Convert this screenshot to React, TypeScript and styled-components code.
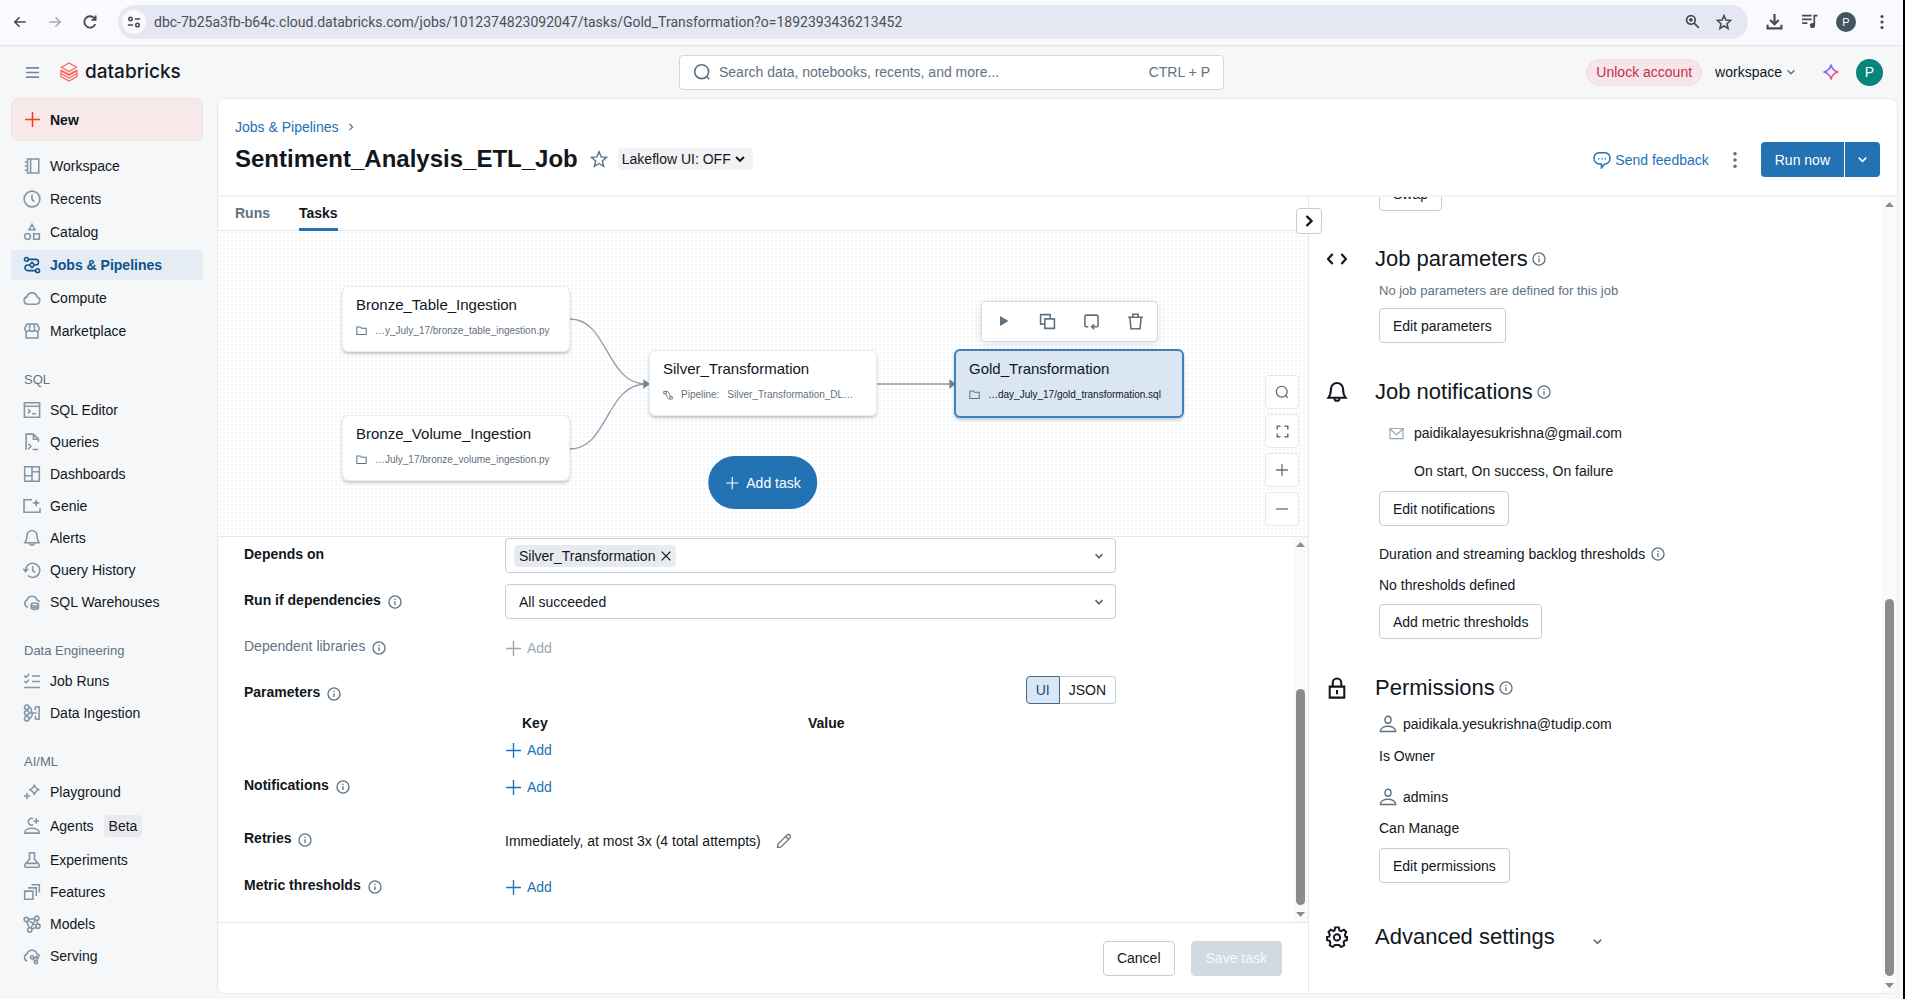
import React from "react";
import styled, { createGlobalStyle, css } from "styled-components";

const c = {
  text: "#11171c",
  muted: "#5f7281",
  icon: "#8396a5",
  link: "#2272b4",
  border: "#c0cdd8",
  line: "#e4e9ee",
  bg: "#f6f7f9",
};

const GlobalStyle = createGlobalStyle`
  * { box-sizing: border-box; }
  body {
    margin: 0;
    font-family: "Liberation Sans", Arial, sans-serif;
    font-size: 14px;
    line-height: 20px;
    color: ${c.text};
    background: ${c.bg};
  }
  button, input, select { font: inherit; color: inherit; margin: 0; }
  button { cursor: pointer; }
  h1, h2, p, ul { margin: 0; padding: 0; font-weight: 400; }
  a { color: ${c.link}; text-decoration: none; }
`;

/* ---------- icons, on a 16 unit grid ---------- */

const shapes: Record<string, React.ReactNode> = {
  back: <path d="M14.5 8H2M7.5 2.5 2 8l5.5 5.5" />,
  forward: <path d="M1.5 8H14M8.5 2.5 14 8l-5.5 5.5" />,
  reload: <path d="M13.3 10A5.7 5.7 0 1 1 12.6 4.6M13.6 1.5v4.3H9.4" />,
  tune: (
    <>
      <circle cx="4" cy="4.5" r="2" />
      <circle cx="12" cy="11.5" r="2" />
      <path d="M9 4.5h6M1 11.5h6" />
    </>
  ),
  zoomIn: (
    <>
      <circle cx="6.3" cy="6.3" r="4.6" />
      <path d="m9.8 9.8 5 5M6.3 4.3v4M4.3 6.3h4" />
    </>
  ),
  star: <path d="m8 1.6 1.9 4.5 4.8.4-3.7 3.2 1.1 4.8L8 12l-4.1 2.500L5 9.700 1.300 6.500l4.800-.4Z" />,
  download: <path d="M8 1v9M4 6.500 8 10.500l4-4M1.500 11v3.500h13V11" />,
  media: (
    <>
      <path d="M1 2.500h9M1 6h9M1 9.500h5M12.500 11.500v-9H15.500" />
      <circle cx="10.800" cy="11.800" r="1.600" fill="currentColor" />
    </>
  ),
  dots: (
    <g fill="currentColor" stroke="none">
      <circle cx="8" cy="2.500" r="1.600" />
      <circle cx="8" cy="8" r="1.600" />
      <circle cx="8" cy="13.500" r="1.600" />
    </g>
  ),
  menu: <path d="M1 3h14M1 8h14M1 13h14" />,
  search: (
    <>
      <circle cx="7.700" cy="7.700" r="6.200" />
      <path d="m11.800 11.800 2.700 2.700" />
    </>
  ),
  plus: <path d="M8 1v14M1 8h14" />,
  minus: <path d="M1 8h14" />,
  down: <path d="m4.500 6.200 3.500 3.500 3.500-3.500" />,
  right: <path d="m5.500 3 5 5-5 5" />,
  close: <path d="m3 3 10 10M13 3 3 13" />,
  notebook: (
    <path d="M4 1.750h10v12.500H4zM6.750 1.750v12.500M1.500 4.250H4M1.500 8H4M1.500 11.750H4" />
  ),
  clock: (
    <>
      <circle cx="8" cy="8" r="7" />
      <path d="M8 4v4.300l2 2" />
    </>
  ),
  catalog: (
    <>
      <path d="M8 1.200 10.700 6H5.300Z" />
      <circle cx="4" cy="12" r="2.600" />
      <path d="M9.500 9.500h5v5h-5z" />
    </>
  ),
  jobs: (
    <>
      <circle cx="3" cy="3" r="1.700" />
      <path d="M4.700 3h6.600a2.500 2.500 0 0 1 0 5h-1.100M5.800 8H4.300a2.500 2.500 0 0 0 0 5h7M8 5.700 10.300 8 8 10.300 5.700 8Z" />
      <circle cx="13" cy="13" r="1.700" />
    </>
  ),
  cloud: <path d="M4.200 13.500h7.600a3.200 3.200 0 0 0 .7-6.300 4.600 4.600 0 0 0-9-.2 3.300 3.300 0 0 0 .7 6.500Z" />,
  store: (
    <path d="M3.500 1.750h9l1.750 3.500v1a2 2 0 0 1-4.100 0 2.100 2.100 0 0 1-4.200 0 2 2 0 0 1-4.200 0v-1ZM2.750 8v6.250h10.500V8M6 1.750 5.800 6M10 1.750l.2 4.250" />
  ),
  terminal: <path d="M1.250 1.500h13.500v13H1.250zM1.250 4.700h13.500M4.500 7.500 6.300 9.200 4.500 11M8 11.300h3.500" />,
  fileCode: <path d="M2.750 15V1h6.500l4.500 4.500V8M9.250 1v4.500h4.500M4.700 9.500 7 12l-2.300 2.500M8.500 14.700h5" />,
  dashboard: <path d="M1.500 1.500h13v13h-13zM8 1.500v13M1.500 9.500H8M8 6h6.500" />,
  genie: (
    <>
      <path d="M8 2.500H.9v11h14.200V10" />
      <path d="M11.700 1.500 12.700 4.300l2.800 1-2.800 1-1 2.800-1-2.800-2.800-1 2.800-1Z" fill="currentColor" stroke="none" />
    </>
  ),
  bell: (
    <>
      <path d="M8 1.400a4.400 4.400 0 0 0-4.400 4.400c0 3.200-.8 5-1.900 6.400h12.600c-1.100-1.400-1.900-3.200-1.900-6.400A4.400 4.400 0 0 0 8 1.400Z" />
      <path d="M6.100 12.500a1.900 1.900 0 0 0 3.800 0" />
    </>
  ),
  history: <path d="M2.300 8.500a6.300 6.300 0 1 1 2 4.400M.3 7l2 2.300L4.500 7M8.600 4.500v4l2.100 1.700" />,
  warehouse: (
    <>
      <path d="M4.500 12.500a3.300 3.300 0 0 1-.9-6.300 4.600 4.600 0 0 1 8.800 0c1.400.2 2.300 1 2.600 2" />
      <ellipse cx="10.500" cy="10.200" rx="3.200" ry="1.300" />
      <path d="M7.300 10.200v3.200c0 1.500 6.400 1.500 6.400 0v-3.200M7.300 12c.6 1.200 5.800 1.200 6.400 0" />
    </>
  ),
  checklist: <path d="m1.200 3.200 1.500 1.500L5.500 1.900M1.200 8 2.700 9.500l2.800-2.800M8 3.500h7M8 8.500h7M1 13.800h14" />,
  ingestion: (
    <>
      <circle cx="3.300" cy="2.900" r="2" />
      <circle cx="3.300" cy="8" r="2" />
      <circle cx="3.300" cy="13.100" r="2" />
      <path d="M5.300 2.900C8.500 3 7 8 8 8s-.5 5-2.700 5.100M5.300 8H12M11 2.500h3.300v11H11M11 2.500v3M11 10.500v3" />
    </>
  ),
  sparkles: (
    <>
      <path d="M10 1.500c.7 2.900 1.600 3.800 4.500 4.500-2.900.7-3.800 1.600-4.500 4.500C9.300 7.600 8.400 6.700 5.500 6c2.900-.7 3.800-1.600 4.500-4.500Z" />
      <path d="M3.600 8.700v5.600M.8 11.500h5.600" />
    </>
  ),
  agents: <path d="M9 1.500a3 3 0 1 0 0 5.400M11.800 1v5M9.300 3.500h5M1.500 14.300c0-5.700 13-5.700 13 0Z" />,
  flask: <path d="M5 1.500h6M5.800 1.500v6L2 11.500c-1 1.500-.5 2.900 1 2.900h10c1.500 0 2-1.400 1-2.900L10.200 7.500v-6M3 11h10" />,
  layers: <path d="M1.500 7.200h7.300v7.300H1.500zM4.500 4.300h7.300v7.200M7.500 1.500h7v7" />,
  models: (
    <>
      <circle cx="2.900" cy="4" r="1.900" />
      <circle cx="12.200" cy="2.900" r="1.900" />
      <circle cx="13.300" cy="10" r="1.900" />
      <circle cx="6" cy="13.300" r="1.900" />
      <path d="m4.800 3.800 5.500-.6M12.500 4.800l.5 3.300M3.300 5.900l2.200 5.500M7.800 12.600l3.700-1.700M4.500 5l7.200 4M10.900 4.300 7 11.700" />
    </>
  ),
  serving: (
    <>
      <path d="M3.700 12.500a3.300 3.300 0 0 1-.1-6.300 4.600 4.600 0 0 1 8.800 0c1.400.2 2.300 1 2.600 2" />
      <circle cx="8" cy="9.200" r="1.400" />
      <circle cx="12.500" cy="9.500" r="1.200" />
      <circle cx="11.500" cy="13.500" r="1.400" />
      <path d="m8.900 10.200 1.700 2.200M9.400 9.300h2" />
    </>
  ),
  feedback: (
    <>
      <path d="M5.500 1.500h5a4.600 4.600 0 0 1 4.500 5.500 4.500 4.500 0 0 1-4.500 4.500L7.500 15v-3.500h-2A4.600 4.600 0 0 1 1 7a4.600 4.600 0 0 1 4.500-5.500Z" />
      <path d="M4.500 6.800h1M7.500 6.800h1M10.500 6.800h1" />
    </>
  ),
  info: (
    <>
      <circle cx="8" cy="8" r="6.900" />
      <path d="M8 7.200v4.300M8 4.300v1.500" />
    </>
  ),
  folder: <path d="M1.200 2.800h5l1.700 1.900h6.900v9H1.200z" />,
  pipeline: (
    <path d="M1.200 2.200h4v4h-4zM10.800 10.500h4v4h-4zM5 2.500h2.500c3 0 2.300 8.500 5.500 8M4.800 6c1.200 0 .5 8.500 5.800 8.200" />
  ),
  play: <path d="M4 3v10l8.500-5Z" fill="currentColor" stroke="none" />,
  copy: <path d="M5.500 10.500h-4v-9h9v4M5.500 5.500h9v9h-9z" />,
  repeat: <path d="M5 13H3.300A1.500 1.500 0 0 1 1.800 11.500v-8A1.500 1.500 0 0 1 3.300 2h9.400a1.500 1.500 0 0 1 1.500 1.500v8a1.500 1.500 0 0 1-1.500 1.500H8.500M10.500 10.700 8.200 13l2.300 2.300" />,
  trash: <path d="M.8 4h14.400M5.500 3.800V1.200h5v2.600M2.800 4.300l.9 10.500h8.600l.9-10.500" />,
  frame: <path d="M1.500 5.500v-4h4M10.500 1.500h4v4M14.500 10.500v4h-4M5.500 14.500h-4v-4" />,
  pencil: <path d="m1.500 14.500.5-3.500 8.900-8.900a2 2 0 0 1 3 3L5 14ZM9.500 3.500l3 3" />,
  code: <path d="M4.500 4 .8 8l3.700 4M11.500 4l3.700 4-3.700 4" />,
  mail: <path d="M1 2.700h14v10.800H1zM1 3.200l7 6.100 7-6.100" />,
  user: (
    <>
      <ellipse cx="8" cy="4.300" rx="2.700" ry="3.100" />
      <path d="M1.200 14.700c0-6.300 13.600-6.300 13.600 0Z" />
    </>
  ),
  lock: <path d="M2.700 7h10.600v8H2.700zM4.900 7V4.200a3.100 3.100 0 0 1 6.200 0V7M8 9.500v3" />,
  gear: (
    <>
      <path d="M6.700 1h2.600l.4 2.100 1.300.6 2-1 1.700 1.700-1 2 .5 1.300.1.300h1v.7l-.1 1.600-1.700.4-.7 1.300.5 2-2.200 1.300L9.500 13.800H6.500L4.900 15.300l-2.200-1.300.5-2-.7-1.300L.8 10.300.7 8l1.600-.3.5-1.300-1-2 1.700-1.700 2 1 .8-.6Z" />
      <circle cx="8" cy="8.300" r="2.300" />
    </>
  ),
};

const Svg = styled.svg`
  flex: none;
  display: block;
`;

function Icon({ name, size = 16, weight = 1.5, color }: { name: string; size?: number; weight?: number; color?: string }) {
  return (
    <Svg
      width={size}
      height={size}
      viewBox="0 0 16 16"
      fill="none"
      stroke={color ?? "currentColor"}
      strokeWidth={weight}
      color={color}
      aria-hidden="true"
    >
      {shapes[name]}
    </Svg>
  );
}

/* ---------- shell ---------- */

const Window = styled.div`
  height: 100vh;
  display: flex;
  flex-direction: column;
  border-right: 2px solid #000;
  overflow: hidden;
`;

const BrowserBar = styled.header`
  flex: none;
  height: 46px;
  display: flex;
  align-items: center;
  padding: 0 13px 2px 12px;
  background: #f9f9fe;
  border-bottom: 1px solid #e1e4ec;
  color: #454954;
`;

const PlainButton = styled.button`
  display: inline-flex;
  align-items: center;
  justify-content: center;
  padding: 0;
  border: 0;
  background: none;
`;

const NavButton = styled(PlainButton)<{ $dim?: boolean }>`
  width: 16px;
  height: 24px;
  margin-right: 19px;
  color: ${(p) => (p.$dim ? "#a9acb5" : "#454954")};
`;

const AddressBar = styled.div`
  flex: 1;
  height: 34px;
  display: flex;
  align-items: center;
  gap: 16px;
  margin-left: 1px;
  padding: 0 16px 0 4px;
  border-radius: 17px;
  background: #e5e8f3;
`;

const SiteInfo = styled(PlainButton)`
  width: 24px;
  height: 24px;
  border-radius: 50%;
  background: #f9f9fe;
`;

const Address = styled.input`
  flex: 1;
  min-width: 0;
  margin-left: -8px;
  padding: 0;
  border: 0;
  background: none;
  font: 14px/20px Roboto, sans-serif;
  color: #4b4f59;
`;

const BrowserTools = styled.div`
  display: flex;
  align-items: center;
  gap: 18px;
  margin-left: 18px;
`;

const Avatar = styled(PlainButton)<{ $size: number; $bg: string }>`
  width: ${(p) => p.$size}px;
  height: ${(p) => p.$size}px;
  border-radius: 50%;
  background: ${(p) => p.$bg};
  color: #fff;
  font-size: ${(p) => (p.$size > 22 ? 14 : 11)}px;
`;

const TopBar = styled.div`
  flex: none;
  height: 52px;
  display: grid;
  grid-template-columns: 1fr minmax(200px, 545px) 1fr;
  align-items: center;
  padding: 0 20px;
`;

const Brand = styled.div`
  display: flex;
  align-items: center;
  padding-left: 5px;
  color: ${c.text};
`;

const BrandLink = styled.a`
  display: flex;
  align-items: center;
  gap: 7px;
  margin-left: 20px;
  font: 500 19px/24px Inter, sans-serif;
  color: #14191e;
`;

const SearchBox = styled.label`
  height: 35px;
  display: flex;
  align-items: center;
  gap: 8px;
  padding: 0 13px;
  border: 1px solid #cdd8e0;
  border-radius: 4px;
  background: #fff;
  color: ${c.muted};
`;

const SearchInput = styled.input`
  flex: 1;
  min-width: 0;
  padding: 0;
  border: 0;
  outline: 0;
  background: none;
  &::placeholder {
    color: ${c.muted};
    opacity: 1;
  }
`;

const Account = styled.div`
  display: flex;
  align-items: center;
  justify-content: flex-end;
`;

const Unlock = styled.button`
  height: 27px;
  padding: 0 9px;
  border: 1px solid #f3dbe1;
  border-radius: 14px;
  background: #f6e6ea;
  color: #c82d4c;
`;

const WorkspaceButton = styled(PlainButton)`
  gap: 1px;
  margin: 0 23px 0 13px;
`;

const Assistant = styled(PlainButton)`
  margin-right: 16px;
`;

const Body = styled.div`
  flex: 1;
  min-height: 0;
  display: flex;
  padding: 0 5px 5px 0;
`;

/* ---------- sidebar ---------- */

const Sidebar = styled.nav`
  flex: none;
  width: 217px;
  padding: 0 14px 0 11px;
  overflow: hidden;
`;

const NewButton = styled.button`
  width: 100%;
  height: 43px;
  display: flex;
  align-items: center;
  gap: 9px;
  margin-bottom: 10px;
  padding: 0 12px;
  border: 1px solid #f6dcdc;
  border-radius: 8px;
  background: #f7e9e9;
  font-weight: 700;
`;

const NavList = styled.ul<{ $roomy?: boolean }>`
  display: flex;
  flex-direction: column;
  gap: ${(p) => (p.$roomy ? 3 : 2)}px;
  list-style: none;
`;

const NavLink = styled.a<{ $active?: boolean; $tall?: boolean }>`
  height: ${(p) => (p.$tall ? 34 : 30)}px;
  display: flex;
  align-items: center;
  gap: 9px;
  padding: 0 12px;
  border-radius: 4px;
  color: ${c.text};
  svg {
    color: ${c.icon};
  }
  ${(p) =>
    p.$active &&
    css`
      background: #e5ecf3;
      font-weight: 700;
      color: #0e538b;
      svg {
        color: #0e538b;
      }
    `}
`;

const GroupLabel = styled.h2`
  margin: 24px 12px 5px 13px;
  font-size: 13px;
  line-height: 20px;
  color: ${c.muted};
`;

const Beta = styled.span`
  margin-left: 1px;
  padding: 1px 5px;
  border-radius: 4px;
  background: #e8eaf0;
`;

/* ---------- main panel ---------- */

const Panel = styled.main`
  flex: 1;
  min-width: 0;
  display: flex;
  flex-direction: column;
  border: 1px solid ${c.line};
  border-radius: 8px;
  background: #fff;
  overflow: hidden;
`;

const PanelHead = styled.div`
  flex: none;
  padding: 18px 17px;
  border-bottom: 2px solid #f0f2f4;
`;

const Crumbs = styled.div`
  display: flex;
  align-items: center;
  gap: 7px;
  margin-bottom: 5px;
  color: ${c.muted};
`;

const TitleRow = styled.div`
  height: 35px;
  display: flex;
  align-items: center;
`;

const TitleGroup = styled.div`
  display: flex;
  align-items: center;
  padding-bottom: 2px;
`;

const Title = styled.h1`
  margin-right: 12px;
  font-size: 24px;
  line-height: 32px;
  font-weight: 700;
`;

const Lakeflow = styled(PlainButton)`
  height: 22px;
  margin-left: 10px;
  padding: 0 4px;
  border-radius: 4px;
  background: #f2f2f4;
`;

const TitleActions = styled.div`
  display: flex;
  align-items: center;
  margin-left: auto;
`;

const Feedback = styled.a`
  display: flex;
  align-items: center;
  gap: 4px;
`;

const MoreButton = styled(PlainButton)`
  margin-left: 17px;
`;

const RunGroup = styled.div`
  display: flex;
  gap: 1px;
  margin-left: 17px;
  border-radius: 4px;
  overflow: hidden;
`;

const RunButton = styled.button<{ $narrow?: boolean }>`
  height: 35px;
  display: flex;
  align-items: center;
  padding: ${(p) => (p.$narrow ? "0 9px" : "0 14px")};
  border: 0;
  background: ${c.link};
  color: #fff;
`;

const Columns = styled.div`
  flex: 1;
  min-height: 0;
  display: grid;
  grid-template-columns: minmax(0, 1fr) 588px;
`;

const TaskColumn = styled.div`
  position: relative;
  min-height: 0;
  display: flex;
  flex-direction: column;
  border-right: 1px solid ${c.line};
`;

const CollapseButton = styled(PlainButton)`
  position: absolute;
  z-index: 1;
  top: 11px;
  right: -14px;
  width: 26px;
  height: 26px;
  border: 1px solid ${c.border};
  border-radius: 4px;
  background: #fff;
`;

const Tabs = styled.div`
  flex: none;
  height: 34px;
  display: flex;
  gap: 29px;
  padding: 0 17px;
  border-bottom: 1px solid ${c.line};
`;

const Tab = styled.button<{ $active?: boolean }>`
  height: 34px;
  padding: 0;
  border: 0;
  border-bottom: 3px solid ${(p) => (p.$active ? c.link : "transparent")};
  background: none;
  font-weight: 700;
  color: ${(p) => (p.$active ? c.text : c.muted)};
`;

const Canvas = styled.section`
  position: relative;
  flex: none;
  height: 306px;
  display: flex;
  align-items: center;
  justify-content: center;
  border-bottom: 1px solid ${c.line};
  background: radial-gradient(circle, #f3f5f6 1px, transparent 1px) 0 0 / 4px 4px #fff;
`;

const Graph = styled.div`
  position: relative;
  width: 842px;
  height: 196px;
`;

const Edges = styled.svg`
  position: absolute;
  inset: 0;
`;

const Node = styled.div<{ $x: number; $y: number; $selected?: boolean }>`
  position: absolute;
  left: ${(p) => p.$x}px;
  top: ${(p) => p.$y}px;
  width: 228px;
  height: 66px;
  padding: 8px 13px;
  border: 1px solid #e8edf1;
  border-radius: 6px;
  background: #fff;
  box-shadow: 0 2px 3px rgba(40, 70, 100, 0.28);
  color: ${c.muted};
  ${(p) =>
    p.$selected &&
    css`
      width: 230px;
      height: 69px;
      border: 2px solid #3c82bd;
      background: #dae6f2;
      color: ${c.text};
      svg {
        color: ${c.muted};
      }
    `}
`;

const NodeTitle = styled.div`
  font-size: 15px;
  line-height: 20px;
  color: ${c.text};
`;

const NodePath = styled.div`
  display: flex;
  align-items: center;
  gap: 8px;
  margin-top: 8px;
  font-size: 10px;
  line-height: 16px;
  white-space: nowrap;
`;

const NodeTools = styled.div`
  position: absolute;
  left: 639px;
  top: 15px;
  width: 177px;
  height: 41px;
  display: flex;
  align-items: center;
  justify-content: space-around;
  border: 1px solid #d3dce4;
  border-radius: 4px;
  background: #fff;
  box-shadow: 0 3px 10px rgba(40, 60, 80, 0.12);
  color: ${c.muted};
  button {
    color: inherit;
  }
`;

const AddTask = styled.button`
  position: absolute;
  left: 50%;
  bottom: 27px;
  transform: translateX(-50%);
  height: 53px;
  display: flex;
  align-items: center;
  gap: 7px;
  padding: 0 17px;
  border: 0;
  border-radius: 27px;
  background: ${c.link};
  color: #fff;
`;

const ZoomTools = styled.div`
  position: absolute;
  right: 9px;
  bottom: 10px;
  display: flex;
  flex-direction: column;
  gap: 5px;
`;

const ZoomButton = styled(PlainButton)`
  width: 34px;
  height: 34px;
  border: 1px solid ${c.line};
  border-radius: 4px;
  background: #fff;
  color: ${c.muted};
`;

/* ---------- task form ---------- */

const Pane = styled.div`
  flex: 1;
  min-height: 0;
  display: flex;
`;

const Form = styled.form`
  flex: 1;
  min-width: 0;
  display: flex;
  flex-direction: column;
  gap: 11px;
  padding: 1px 0 0 26px;
  overflow: hidden;
`;

const Row = styled.div<{ $height?: number }>`
  flex: none;
  height: ${(p) => p.$height ?? 35}px;
  display: grid;
  grid-template-columns: 261px minmax(0, 611px);
`;

const Label = styled.div<{ $muted?: boolean }>`
  display: flex;
  gap: 7px;
  padding-top: 6px;
  font-weight: ${(p) => (p.$muted ? 400 : 700)};
  color: ${(p) => (p.$muted ? c.muted : c.text)};
  svg {
    margin-top: 5px;
    color: ${c.muted};
  }
`;

const Field = styled.div`
  position: relative;
  height: 35px;
  display: flex;
  align-items: center;
  justify-content: space-between;
  padding: 0 8px;
  border: 1px solid ${c.border};
  border-radius: 4px;
  color: ${c.muted};
`;

const Chip = styled.span`
  height: 22px;
  display: flex;
  align-items: center;
  gap: 4px;
  padding: 0 3px 0 5px;
  border-radius: 4px;
  background: #e7eaee;
  color: ${c.text};
`;

const ChipInput = styled.input`
  flex: 1;
  min-width: 0;
  border: 0;
  outline: 0;
  background: none;
`;

const Select = styled.select`
  flex: 1;
  height: 33px;
  margin: 0 -26px 0 -8px;
  padding: 0 26px 0 13px;
  appearance: none;
  border: 0;
  background: none;
  color: ${c.text};
`;

const AddButton = styled.button`
  display: flex;
  align-items: center;
  gap: 5px;
  padding: 0;
  border: 0;
  background: none;
  color: ${c.link};
  &:disabled {
    color: #9aa8b4;
  }
`;

const AddCell = styled.div`
  padding-top: 8px;
`;

const RetryValue = styled.div`
  display: flex;
  align-items: flex-start;
  gap: 15px;
  padding-top: 9px;
  button {
    height: 20px;
    color: ${c.muted};
  }
`;

const Toggle = styled.div`
  display: flex;
  justify-content: flex-end;
`;

const ToggleButton = styled.button<{ $active?: boolean }>`
  height: 28px;
  padding: 0 9px;
  border: 1px solid ${(p) => (p.$active ? "#3f6b93" : c.border)};
  border-radius: ${(p) => (p.$active ? "4px 0 0 4px" : "0 4px 4px 0")};
  border-left-width: ${(p) => (p.$active ? 1 : 0)}px;
  background: ${(p) => (p.$active ? "#dae6f2" : "#fff")};
  color: ${(p) => (p.$active ? "#0e538b" : c.text)};
`;

const ParamTable = styled.table`
  width: 100%;
  margin-top: 9px;
  border-collapse: collapse;
  table-layout: fixed;
  th {
    padding: 0 0 0 17px;
    text-align: left;
    font-weight: 700;
    line-height: 20px;
  }
  th:first-child {
    width: 286px;
  }
  td {
    padding: 7px 0 0;
  }
`;

const Footer = styled.div`
  flex: none;
  height: 71px;
  display: flex;
  align-items: center;
  justify-content: flex-end;
  gap: 16px;
  padding: 0 26px 0 0;
  border-top: 1px solid ${c.line};
`;

const Button = styled.button`
  height: 35px;
  padding: 0 13px;
  border: 1px solid ${c.border};
  border-radius: 4px;
  background: #fff;
  &:disabled {
    padding: 0 14px;
    border-color: #d1d9e1;
    background: #d1d9e1;
    color: #f7f9fa;
  }
`;

/* ---------- scroll bar ---------- */

const ScrollTrack = styled.div`
  flex: none;
  width: 15px;
  display: flex;
  flex-direction: column;
  align-items: center;
  background: #fafafb;
`;

const ScrollPart = styled.div<{ $share: number; $thumb?: boolean }>`
  flex: ${(p) => p.$share} 0 0;
  width: 9px;
  border-radius: 5px;
  background: ${(p) => (p.$thumb ? "#8b8b8b" : "transparent")};
`;

function ScrollBar({ before, thumb, after }: { before: number; thumb: number; after: number }) {
  return (
    <ScrollTrack aria-hidden="true">
      <Svg width="15" height="14" viewBox="0 0 15 14">
        <path d="M7.500 5 12 10H3Z" fill="#8b8b8b" />
      </Svg>
      <ScrollPart $share={before} />
      <ScrollPart $share={thumb} $thumb />
      <ScrollPart $share={after} />
      <Svg width="15" height="14" viewBox="0 0 15 14">
        <path d="M7.500 9 12 4H3Z" fill="#8b8b8b" />
      </Svg>
    </ScrollTrack>
  );
}

/* ---------- job details ---------- */

const Details = styled.aside`
  min-height: 0;
  display: flex;
`;

const DetailsScroll = styled.div`
  flex: 1;
  min-width: 0;
  min-height: 0;
  display: flex;
  flex-direction: column;
  justify-content: flex-end;
  padding: 0 0 42px 18px;
  overflow: hidden;
`;

const DetailBlock = styled.section<{ $space: number }>`
  flex: none;
  margin-top: ${(p) => p.$space}px;
`;

const DetailHead = styled.div`
  display: flex;
  align-items: center;
  h2 {
    margin: 0 4px 0 28px;
    font-size: 22px;
    line-height: 28px;
  }
  > h2 ~ svg {
    color: ${c.muted};
  }
`;

const HeadIcon = styled.span`
  flex: none;
  width: 20px;
  display: flex;
  justify-content: center;
`;

const Line = styled.div<{ $space: number; $inset?: number; $muted?: boolean; $gap?: number }>`
  display: flex;
  align-items: center;
  gap: ${(p) => p.$gap ?? 6}px;
  min-height: 20px;
  margin: ${(p) => p.$space}px 0 0 ${(p) => 52 + (p.$inset ?? 0)}px;
  font-size: ${(p) => (p.$muted ? 13 : 14)}px;
  color: ${(p) => (p.$muted ? c.muted : c.text)};
  svg {
    color: ${c.muted};
  }
`;

function Head({ icon, title, info = true, size = 20, weight }: { icon: string; title: string; info?: boolean; size?: number; weight?: number }) {
  return (
    <DetailHead>
      <HeadIcon><Icon name={icon} size={size} weight={weight} /></HeadIcon>
      <h2>{title}</h2>
      {info && <Icon name="info" size={14} />}
    </DetailHead>
  );
}

const AdvancedHead = styled.div`
  display: flex;
  align-items: center;
  gap: 30px;
  button {
    padding-top: 8px;
  }
`;

type Item = { icon: string; label: string; active?: boolean; beta?: boolean };

const mainNav: Item[] = [
  { icon: "notebook", label: "Workspace" },
  { icon: "clock", label: "Recents" },
  { icon: "catalog", label: "Catalog" },
  { icon: "jobs", label: "Jobs & Pipelines", active: true },
  { icon: "cloud", label: "Compute" },
  { icon: "store", label: "Marketplace" },
];

const navGroups: { title: string; items: Item[] }[] = [
  {
    title: "SQL",
    items: [
      { icon: "terminal", label: "SQL Editor" },
      { icon: "fileCode", label: "Queries" },
      { icon: "dashboard", label: "Dashboards" },
      { icon: "genie", label: "Genie" },
      { icon: "bell", label: "Alerts" },
      { icon: "history", label: "Query History" },
      { icon: "warehouse", label: "SQL Warehouses" },
    ],
  },
  {
    title: "Data Engineering",
    items: [
      { icon: "checklist", label: "Job Runs" },
      { icon: "ingestion", label: "Data Ingestion" },
    ],
  },
  {
    title: "AI/ML",
    items: [
      { icon: "sparkles", label: "Playground" },
      { icon: "agents", label: "Agents", beta: true },
      { icon: "flask", label: "Experiments" },
      { icon: "layers", label: "Features" },
      { icon: "models", label: "Models" },
      { icon: "serving", label: "Serving" },
    ],
  },
];

function Nav({ items, roomy }: { items: Item[]; roomy?: boolean }) {
  return (
    <NavList $roomy={roomy}>
      {items.map((item) => (
        <li key={item.label}>
          <NavLink href="#" $active={item.active} $tall={item.beta}>
            <Icon name={item.icon} size={18} weight={1.4} />
            {item.label}
            {item.beta && <Beta>Beta</Beta>}
          </NavLink>
        </li>
      ))}
    </NavList>
  );
}

function Logo() {
  return (
    <Svg width="18" height="20" viewBox="0 0 18 20" fill="none" stroke="#fa6a5c" strokeWidth="1.300" aria-hidden="true">
      <path d="M9 1 1.500 5.300 9 9.500l7.500-4.200Z" />
      <path d="M1 7.800v1L9 13.300l8-4.500v-1M1 8l8 4.300L17 8M1 11.500 9 16l8-4.500M1 9v5.500L9 19l8-4.500V9" />
    </Svg>
  );
}

function Sparkle() {
  return (
    <Svg width="18" height="18" viewBox="0 0 16 16" fill="none" aria-hidden="true">
      <defs>
        <linearGradient id="spark" x1="0" y1="0" x2="1" y2="1">
          <stop offset="0.2" stopColor="#4a7dff" />
          <stop offset="0.5" stopColor="#c05be8" />
          <stop offset="0.8" stopColor="#ff5a4d" />
        </linearGradient>
      </defs>
      <path
        d="M8 1.800C8.800 5 11 7.200 14.200 8 11 8.800 8.800 11 8 14.200 7.200 11 5 8.800 1.800 8 5 7.200 7.200 5 8 1.800Z"
        stroke="url(#spark)"
        strokeWidth="1.500"
        strokeLinejoin="round"
      />
    </Svg>
  );
}

function AddLink({ disabled, label }: { disabled?: boolean; label: string }) {
  return (
    <AddButton type="button" disabled={disabled} aria-label={label}>
      <Icon name="plus" size={17} weight={1.3} />
      Add
    </AddButton>
  );
}

export default function App() {
  return (
    <Window>
      <GlobalStyle />
      <BrowserBar>
        <NavButton aria-label="Back"><Icon name="back" size={14} weight={1.8} /></NavButton>
        <NavButton aria-label="Forward" $dim><Icon name="forward" size={14} weight={1.8} /></NavButton>
        <NavButton aria-label="Reload"><Icon name="reload" size={16} weight={1.8} /></NavButton>
        <AddressBar>
          <SiteInfo aria-label="Site information"><Icon name="tune" size={14} weight={1.8} /></SiteInfo>
          <Address
            aria-label="Address"
            readOnly
            value="dbc-7b25a3fb-b64c.cloud.databricks.com/jobs/1012374823092047/tasks/Gold_Transformation?o=1892393436213452"
          />
          <PlainButton aria-label="Zoom"><Icon name="zoomIn" size={15} weight={1.8} /></PlainButton>
          <PlainButton aria-label="Bookmark"><Icon name="star" size={16} /></PlainButton>
        </AddressBar>
        <BrowserTools>
          <PlainButton aria-label="Downloads"><Icon name="download" size={17} weight={2} /></PlainButton>
          <PlainButton aria-label="Media"><Icon name="media" size={17} weight={1.6} /></PlainButton>
          <Avatar $size={20} $bg="#44555f" aria-label="Profile">P</Avatar>
          <PlainButton aria-label="Browser menu"><Icon name="dots" size={16} /></PlainButton>
        </BrowserTools>
      </BrowserBar>

      <TopBar>
        <Brand>
          <PlainButton aria-label="Menu"><Icon name="menu" size={15} weight={1.8} color="#75899a" /></PlainButton>
          <BrandLink href="#">
            <Logo />
            databricks
          </BrandLink>
        </Brand>
        <SearchBox>
          <Icon name="search" size={18} weight={1.4} />
          <SearchInput type="text" placeholder="Search data, notebooks, recents, and more..." aria-label="Search" />
          <span>CTRL + P</span>
        </SearchBox>
        <Account>
          <Unlock>Unlock account</Unlock>
          <WorkspaceButton>
            workspace
            <Icon name="down" size={16} color={c.muted} />
          </WorkspaceButton>
          <Assistant aria-label="Assistant"><Sparkle /></Assistant>
          <Avatar $size={27} $bg="#06857a" aria-label="Account">P</Avatar>
        </Account>
      </TopBar>

      <Body>
        <Sidebar>
          <NewButton>
            <Icon name="plus" size={17} weight={1.4} color="#ff3621" />
            New
          </NewButton>
          <Nav items={mainNav} roomy />
          {navGroups.map((group) => (
            <React.Fragment key={group.title}>
              <GroupLabel>{group.title}</GroupLabel>
              <Nav items={group.items} />
            </React.Fragment>
          ))}
        </Sidebar>

        <Panel>
          <PanelHead>
            <Crumbs>
              <a href="#">Jobs &amp; Pipelines</a>
              <Icon name="right" size={10} weight={2} />
            </Crumbs>
            <TitleRow>
              <TitleGroup>
                <Title>Sentiment_Analysis_ETL_Job</Title>
                <PlainButton aria-label="Favourite"><Icon name="star" size={18} weight={1.3} color={c.muted} /></PlainButton>
                <Lakeflow>
                  Lakeflow UI: OFF
                  <Icon name="down" size={18} weight={1.8} />
                </Lakeflow>
              </TitleGroup>
              <TitleActions>
                <Feedback href="#">
                  <Icon name="feedback" size={18} weight={1.3} />
                  Send feedback
                </Feedback>
                <MoreButton aria-label="More actions"><Icon name="dots" size={18} color={c.muted} /></MoreButton>
                <RunGroup>
                  <RunButton>Run now</RunButton>
                  <RunButton $narrow aria-label="Run options"><Icon name="down" size={17} /></RunButton>
                </RunGroup>
              </TitleActions>
            </TitleRow>
          </PanelHead>

          <Columns>
            <TaskColumn>
              <CollapseButton aria-label="Collapse details"><Icon name="right" size={16} weight={2.4} /></CollapseButton>
              <Tabs role="tablist">
                <Tab role="tab" aria-selected={false}>Runs</Tab>
                <Tab role="tab" aria-selected $active>Tasks</Tab>
              </Tabs>

              <Canvas>
                <Graph>
                  <Edges width="842" height="196" fill="none" stroke="#8a9cac" strokeWidth="1.300" aria-hidden="true">
                    <path d="M228 33C266 33 264 98 304 98M228 163C266 163 264 98 304 98M535 98h74" />
                    <path d="M302 94.500 307 98l-5 3.500ZM608 94.500l5 3.500-5 3.500Z" fill="#6f8496" stroke="#6f8496" />
                  </Edges>
                  <Node $x={0} $y={0}>
                    <NodeTitle>Bronze_Table_Ingestion</NodeTitle>
                    <NodePath><Icon name="folder" size={11} />…y_July_17/bronze_table_ingestion.py</NodePath>
                  </Node>
                  <Node $x={0} $y={129}>
                    <NodeTitle>Bronze_Volume_Ingestion</NodeTitle>
                    <NodePath><Icon name="folder" size={11} />…July_17/bronze_volume_ingestion.py</NodePath>
                  </Node>
                  <Node $x={307} $y={64}>
                    <NodeTitle>Silver_Transformation</NodeTitle>
                    <NodePath><Icon name="pipeline" size={10} />Pipeline: <span>Silver_Transformation_DL…</span></NodePath>
                  </Node>
                  <Node $x={612} $y={63} $selected>
                    <NodeTitle>Gold_Transformation</NodeTitle>
                    <NodePath><Icon name="folder" size={11} />…day_July_17/gold_transformation.sql</NodePath>
                  </Node>
                  <NodeTools>
                    <PlainButton aria-label="Run task"><Icon name="play" size={16} /></PlainButton>
                    <PlainButton aria-label="Clone task"><Icon name="copy" size={17} /></PlainButton>
                    <PlainButton aria-label="Loop over task"><Icon name="repeat" size={17} /></PlainButton>
                    <PlainButton aria-label="Delete task"><Icon name="trash" size={17} /></PlainButton>
                  </NodeTools>
                </Graph>
                <AddTask>
                  <Icon name="plus" size={14} weight={1.3} />
                  Add task
                </AddTask>
                <ZoomTools>
                  <ZoomButton aria-label="Search tasks"><Icon name="search" size={14} /></ZoomButton>
                  <ZoomButton aria-label="Fit to screen"><Icon name="frame" size={13} weight={1.8} /></ZoomButton>
                  <ZoomButton aria-label="Zoom in"><Icon name="plus" size={14} /></ZoomButton>
                  <ZoomButton aria-label="Zoom out"><Icon name="minus" size={14} /></ZoomButton>
                </ZoomTools>
              </Canvas>

              <Pane>
                <Form>
                  <Row>
                    <Label as="label" htmlFor="depends">Depends on</Label>
                    <Field>
                      <Chip>
                        Silver_Transformation
                        <PlainButton type="button" aria-label="Remove Silver_Transformation">
                          <Icon name="close" size={14} />
                        </PlainButton>
                      </Chip>
                      <ChipInput id="depends" />
                      <Icon name="down" size={16} weight={1.8} />
                    </Field>
                  </Row>
                  <Row>
                    <Label as="label" htmlFor="runif">Run if dependencies <Icon name="info" size={14} /></Label>
                    <Field>
                      <Select id="runif" defaultValue="all">
                        <option value="all">All succeeded</option>
                      </Select>
                      <Icon name="down" size={16} weight={1.8} />
                    </Field>
                  </Row>
                  <Row>
                    <Label $muted>Dependent libraries <Icon name="info" size={14} /></Label>
                    <AddCell><AddLink disabled label="Add library" /></AddCell>
                  </Row>
                  <Row $height={82}>
                    <Label>Parameters <Icon name="info" size={14} /></Label>
                    <div>
                      <Toggle>
                        <ToggleButton type="button" $active aria-pressed>UI</ToggleButton>
                        <ToggleButton type="button" aria-pressed={false}>JSON</ToggleButton>
                      </Toggle>
                      <ParamTable>
                        <thead>
                          <tr><th scope="col">Key</th><th scope="col">Value</th></tr>
                        </thead>
                        <tbody>
                          <tr><td colSpan={2}><AddLink label="Add parameter" /></td></tr>
                        </tbody>
                      </ParamTable>
                    </div>
                  </Row>
                  <Row $height={42}>
                    <Label>Notifications <Icon name="info" size={14} /></Label>
                    <AddCell><AddLink label="Add notification" /></AddCell>
                  </Row>
                  <Row $height={36}>
                    <Label>Retries <Icon name="info" size={14} /></Label>
                    <RetryValue>
                      Immediately, at most 3x (4 total attempts)
                      <PlainButton type="button" aria-label="Edit retries"><Icon name="pencil" size={16} weight={1.3} /></PlainButton>
                    </RetryValue>
                  </Row>
                  <Row>
                    <Label>Metric thresholds <Icon name="info" size={14} /></Label>
                    <AddCell><AddLink label="Add metric threshold" /></AddCell>
                  </Row>
                </Form>
                <ScrollBar before={138} thumb={216} after={3} />
              </Pane>
              <Footer>
                <Button type="button">Cancel</Button>
                <Button type="button" disabled>Save task</Button>
              </Footer>
            </TaskColumn>

            <Details>
              <DetailsScroll>
                <DetailBlock $space={0}>
                  <Line $space={0}><Button>Swap</Button></Line>
                </DetailBlock>
                <DetailBlock $space={34}>
                  <Head icon="code" title="Job parameters" weight={1.8} />
                  <Line $space={8} $muted>No job parameters are defined for this job</Line>
                  <Line $space={7}><Button>Edit parameters</Button></Line>
                </DetailBlock>
                <DetailBlock $space={35}>
                  <Head icon="bell" title="Job notifications" size={22} />
                  <Line $space={17} $inset={10} $gap={10}><Icon name="mail" size={15} weight={1.2} color="#93a8b7" />paidikalayesukrishna@gmail.com</Line>
                  <Line $space={18} $inset={35}>On start, On success, On failure</Line>
                  <Line $space={10}><Button>Edit notifications</Button></Line>
                  <Line $space={18}>Duration and streaming backlog thresholds <Icon name="info" size={14} /></Line>
                  <Line $space={11}>No thresholds defined</Line>
                  <Line $space={9}><Button>Add metric thresholds</Button></Line>
                </DetailBlock>
                <DetailBlock $space={35}>
                  <Head icon="lock" title="Permissions" size={22} />
                  <Line $space={12}><Icon name="user" size={18} weight={1.3} />paidikala.yesukrishna@tudip.com</Line>
                  <Line $space={12}>Is Owner</Line>
                  <Line $space={21}><Icon name="user" size={18} weight={1.3} />admins</Line>
                  <Line $space={11}>Can Manage</Line>
                  <Line $space={10}><Button>Edit permissions</Button></Line>
                </DetailBlock>
                <DetailBlock $space={40}>
                  <AdvancedHead>
                    <Head icon="gear" title="Advanced settings" info={false} size={22} weight={1.4} />
                    <PlainButton aria-label="Show advanced settings"><Icon name="down" size={17} color={c.muted} /></PlainButton>
                  </AdvancedHead>
                </DetailBlock>
              </DetailsScroll>
              <ScrollBar before={388} thumb={377} after={3} />
            </Details>
          </Columns>
        </Panel>
      </Body>
    </Window>
  );
}
